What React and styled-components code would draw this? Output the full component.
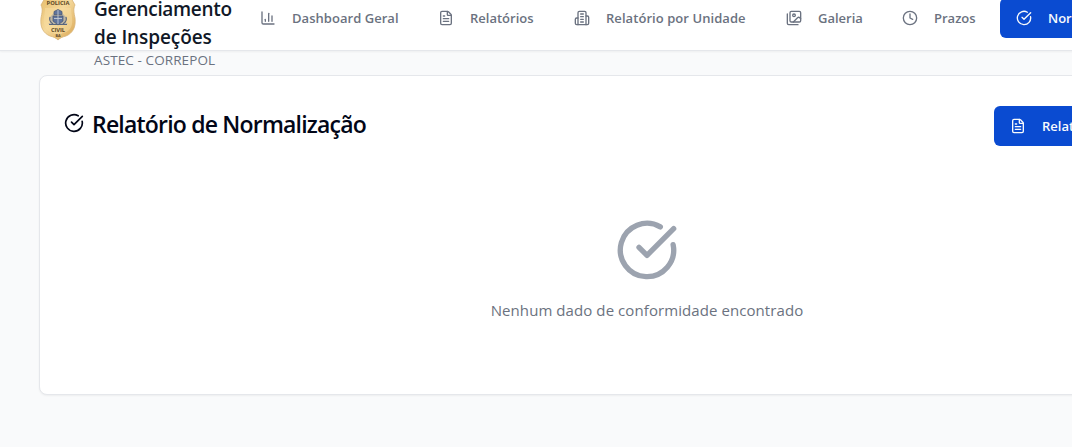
import React from "react";
import styled, { createGlobalStyle } from "styled-components";
import { ChartColumn, FileText, Clock, CircleCheckBig } from "lucide-react";

const GlobalStyle = createGlobalStyle`
  * { box-sizing: border-box; }
  html, body { margin: 0; height: 100%; overflow: hidden; }
  body {
    background: #f9fafb;
    font-family: "Open Sans", "Noto Sans", sans-serif;
    color: #020617;
  }
  svg { display: block; flex-shrink: 0; }
`;

const Page = styled.div`
  width: 1294px;
  margin-top: -14px;
`;

const Header = styled.header`
  display: flex;
  align-items: flex-start;
  height: 65px;
  padding-left: 40px;
  background: #fff;
  border-bottom: 1px solid #e5e7eb;
  box-shadow: 0 1px 2px rgba(0, 0, 0, 0.05);
`;

const Brand = styled.div`
  display: flex;
  gap: 18px;
  width: 204px;
  flex-shrink: 0;
`;

const LogoBox = styled.div`
  width: 36px;
  padding-top: 10px;
`;

const BrandText = styled.div`
  padding-top: 9px;
  white-space: nowrap;
`;

const BrandName = styled.div`
  font-size: 19px;
  line-height: 28px;
  font-weight: 600;
  letter-spacing: ${(p) => p.$spacing}px;
  color: #111827;
`;

const BrandUnit = styled.div`
  font-size: 13.5px;
  line-height: 18px;
  letter-spacing: 0.1px;
  color: #6b7280;
`;

const Nav = styled.nav`
  display: flex;
  gap: 8px;
  padding-top: 12px;
`;

const Button = styled.button`
  display: flex;
  align-items: center;
  gap: 16px;
  flex-shrink: 0;
  height: 40px;
  padding: 0 16px;
  border: 0;
  border-radius: 6px;
  background: ${(p) => (p.$active ? "#0a4bd1" : "transparent")};
  color: ${(p) => (p.$active ? "#f8fafc" : "#6b7280")};
  font: 600 13px/20px "Open Sans", "Noto Sans", sans-serif;
  text-align: left;
  white-space: nowrap;
`;

const Label = styled.span`
  width: ${(p) => p.$width}px;
  letter-spacing: ${(p) => p.$spacing || 0}px;
`;

const Card = styled.main`
  width: 1216px;
  height: 320px;
  margin: 24px 0 0 39px;
  padding: 30px 24px 24px;
  background: #fff;
  border: 1px solid #e5e7eb;
  border-radius: 8px;
  box-shadow: 0 1px 2px rgba(0, 0, 0, 0.05);
`;

const CardHeader = styled.div`
  display: flex;
  justify-content: space-between;
  height: 40px;
`;

const Title = styled.h1`
  display: flex;
  align-items: center;
  gap: 8px;
  margin: 0;
  height: 36px;
  font-size: 23px;
  line-height: 32px;
  font-weight: 600;
  letter-spacing: -0.8px;
  white-space: nowrap;

  svg { margin-bottom: 3px; }
`;

const Empty = styled.div`
  display: flex;
  flex-direction: column;
  align-items: center;
  gap: 16px;
  padding-top: 72px;
  color: #9ca3af;
`;

const EmptyText = styled.p`
  margin: 0;
  font-size: 15px;
  line-height: 24px;
  letter-spacing: 0.08px;
  color: #6b7280;
`;

const BadgeText = styled.text`
  font-family: "Open Sans", sans-serif;
  font-weight: 700;
  fill: #5c4826;
  text-anchor: middle;
`;

const Images = ({ size }) => (
  <svg width={size} height={size} viewBox="0 0 24 24" fill="none" stroke="currentColor" strokeWidth="2" strokeLinecap="round" strokeLinejoin="round">
    <path d="M18 22H4a2 2 0 0 1-2-2V6" />
    <path d="m22 13-1.296-1.296a2.41 2.41 0 0 0-3.408 0L11 18" />
    <circle cx="12" cy="8" r="2" />
    <rect width="16" height="16" x="6" y="2" rx="2" />
  </svg>
);

const Building = ({ size }) => (
  <svg width={size} height={size} viewBox="0 0 24 24" fill="none" stroke="currentColor" strokeWidth="2" strokeLinecap="round" strokeLinejoin="round">
    <path d="M6 22V4a2 2 0 0 1 2-2h8a2 2 0 0 1 2 2v18Z" />
    <path d="M6 12H4a2 2 0 0 0-2 2v6a2 2 0 0 0 2 2h2" />
    <path d="M18 9h2a2 2 0 0 1 2 2v9a2 2 0 0 1-2 2h-2" />
    <path d="M10 6h4M10 10h4M10 14h4M10 18h4" />
  </svg>
);

const Badge = () => (
  <svg width="36" height="45" viewBox="0 0 36 45">
    <defs>
      <linearGradient id="gold" x1="0" x2="1" y1="0" y2="1">
        <stop offset="0" stopColor="#e6bd6c" />
        <stop offset="0.45" stopColor="#f5d99c" />
        <stop offset="1" stopColor="#d9a653" />
      </linearGradient>
    </defs>
    <path d="M18 1 L22 3 L31 2 L35 9 C33 13 34 17 35 22 C36 31 33 37 26 40 C22 41 20 42 18 44 C16 42 14 41 10 40 C3 37 0 31 1 22 C2 17 3 13 1 9 L5 2 L14 3Z" fill="url(#gold)" stroke="#d8b477" strokeWidth="0.8" />
    <path d="M5 12 C5 19 3 22 4 28 C5 33 9 36 13 37 L18 40 L23 37 C28 36 31 33 32 28 C33 22 31 19 31 12Z" fill="#f8dda0" opacity="0.55" />
    <BadgeText x="18" y="9.3" fontSize="5.8" textLength="23">POLICIA</BadgeText>
    <path d="M10 21 L14 17 H22 L26 21 L25 26 L28 28 H8 L11 26Z" fill="#a5a7a8" opacity="0.7" />
    <path d="M14 15.5l4-2 4 2v3h-8ZM13 20h10v5l-5 4-5-4Z" fill="#60749c" stroke="#465571" strokeWidth="0.7" />
    <path d="M10 21c-1 3 0 5 3 7M26 21c1 3 0 5-3 7M9 28.5h18" fill="none" stroke="#58657e" strokeWidth="1.2" />
    <path d="M18 14v14M14 22.5h8" stroke="#c5cbd3" strokeWidth="0.9" />
    <BadgeText x="18" y="36.3" fontSize="5.8" textLength="14">CIVIL</BadgeText>
    <BadgeText x="18" y="41" fontSize="3.8">BA</BadgeText>
  </svg>
);

const items = [
  { icon: ChartColumn, label: "Dashboard Geral", width: 106, spacing: 0.04 },
  { icon: FileText, label: "Relatórios", width: 64 },
  { icon: Building, label: "Relatório por Unidade", width: 140, spacing: 0.06 },
  { icon: Images, label: "Galeria", width: 44 },
  { icon: Clock, label: "Prazos", width: 42 },
  { icon: CircleCheckBig, label: "Normalização", width: 90, active: true },
];

export default function App() {
  return (
    <>
      <GlobalStyle />
      <Page>
        <Header>
          <Brand>
            <LogoBox><Badge /></LogoBox>
            <BrandText>
              <BrandName $spacing={-0.33}>Gerenciamento</BrandName>
              <BrandName $spacing={-0.1}>de Inspeções</BrandName>
              <BrandUnit>ASTEC - CORREPOL</BrandUnit>
            </BrandText>
          </Brand>
          <Nav>
            {items.map(({ icon: Icon, label, width, spacing, active }) => (
              <Button key={label} $active={active}>
                <Icon size={16} />
                <Label $width={width} $spacing={spacing}>{label}</Label>
              </Button>
            ))}
          </Nav>
        </Header>
        <Card>
          <CardHeader>
            <Title><CircleCheckBig size={20} />Relatório de Normalização</Title>
            <Button $active><FileText size={16} /><Label $width={172}>Relatório de Normalização</Label></Button>
          </CardHeader>
          <Empty>
            <CircleCheckBig size={64} />
            <EmptyText>Nenhum dado de conformidade encontrado</EmptyText>
          </Empty>
        </Card>
      </Page>
    </>
  );
}
